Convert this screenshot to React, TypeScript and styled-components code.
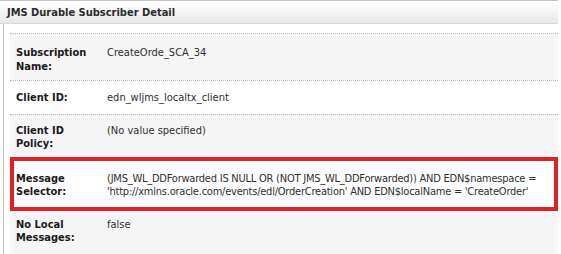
import React from "react";
import styled, { createGlobalStyle, css } from "styled-components";

const Global = createGlobalStyle`
  html, body { margin: 0; padding: 0; background: #ffffff; }
  body {
    font-family: "DejaVu Sans Condensed", "DejaVu Sans", sans-serif;
    font-stretch: condensed;
    width: 561px;
    height: 254px;
    overflow: hidden;
  }
`;

const Panel = styled.div`
  width: 558px;
  height: 254px;
  display: flex;
  flex-direction: column;
`;

const Header = styled.div`
  height: 22px;
  flex: none;
  border-top: 1px solid #c4c4c4;
  border-bottom: 1px solid #d6d6d6;
  background: linear-gradient(#ffffff 0%, #f6f7f6 40%, #e6e7e6 100%);
  display: flex;
  align-items: center;
  padding-left: 7px;
  font-weight: bold;
  font-size: 11px;
  color: #2b2b2b;
`;

const Body = styled.div`
  flex: 1;
  min-height: 0;
  margin-left: 3px;
  border-left: 1px solid #c9c9c9;
  padding: 9px 0 0 6px;
  display: flex;
  flex-direction: column;
`;

const Row = styled.div<{ $shade?: boolean; $pt: number; $pb: number; $dotted?: boolean; $highlight?: boolean; $fill?: boolean }>`
  display: grid;
  grid-template-columns: 91px 1fr;
  align-content: start;
  flex: ${(p) => (p.$fill ? "1" : "none")};
  padding: ${(p) => p.$pt}px 4px ${(p) => p.$pb}px 6px;
  background: ${(p) => (p.$shade ? "#f5f5f5" : "#ffffff")};
  border-top: ${(p) => (p.$dotted ? "1px dotted #b8b8b8" : "none")};
  font-size: 11px;
  line-height: 13.5px;
  ${(p) =>
    p.$highlight &&
    css`
      box-shadow: inset 0 0 0 4px #dc2229;
    `}
`;

const Label = styled.div`
  font-weight: bold;
  color: #1a1a1a;
`;

const Value = styled.div<{ $tight?: boolean }>`
  color: #2e2e2e;
  white-space: pre;
  letter-spacing: ${(p) => (p.$tight ? "-0.23px" : "0")};
`;

export default function App() {
  return (
    <>
      <Global />
      <Panel>
        <Header>JMS Durable Subscriber Detail</Header>
        <Body>
          <Row $shade $dotted $pt={12} $pb={7}>
            <Label>Subscription<br />Name:</Label>
            <Value>CreateOrde_SCA_34</Value>
          </Row>
          <Row $dotted $pt={10} $pb={9}>
            <Label>Client ID:</Label>
            <Value>edn_wljms_localtx_client</Value>
          </Row>
          <Row $shade $dotted $pt={9} $pb={6}>
            <Label>Client ID<br />Policy:</Label>
            <Value>(No value specified)</Value>
          </Row>
          <Row $highlight $pt={15} $pb={12}>
            <Label>Message<br />Selector:</Label>
            <Value $tight>
              {"(JMS_WL_DDForwarded IS NULL OR (NOT JMS_WL_DDForwarded)) AND EDN$namespace =\n'http://xmlns.oracle.com/events/edl/OrderCreation' AND EDN$localName = 'CreateOrder'"}
            </Value>
          </Row>
          <Row $shade $fill $pt={7} $pb={0}>
            <Label>No Local<br />Messages:</Label>
            <Value>false</Value>
          </Row>
        </Body>
      </Panel>
    </>
  );
}
